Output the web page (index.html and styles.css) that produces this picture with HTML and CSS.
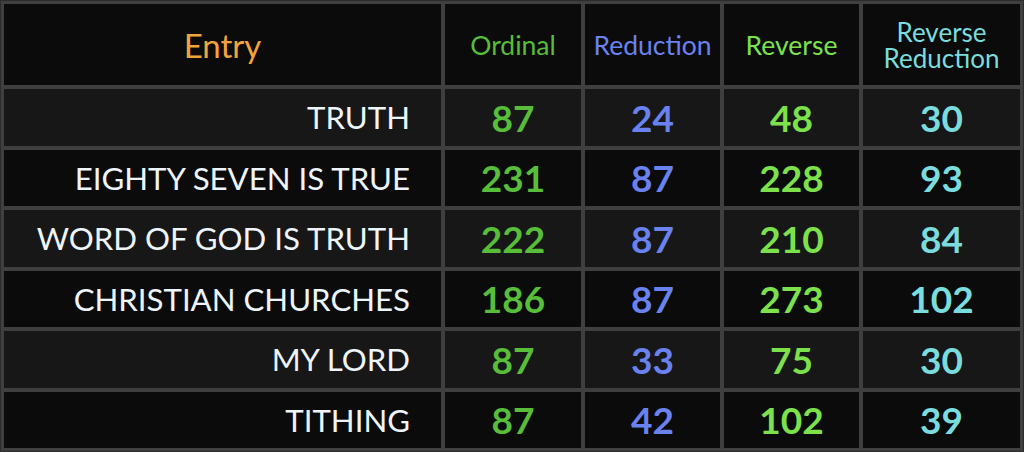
FILE: index.html
```html
<!DOCTYPE html>
<html>
<head>
<meta charset="utf-8">
<link rel="stylesheet" href="styles.css">
</head>
<body>
<div class="table">
  <div class="cell head entry-h">Entry</div>
  <div class="cell head c-ord">Ordinal</div>
  <div class="cell head c-red">Reduction</div>
  <div class="cell head c-rev">Reverse</div>
  <div class="cell head c-rr two">Reverse<br>Reduction</div>

  <div class="cell light name">TRUTH</div>
  <div class="cell light num c-ord">87</div>
  <div class="cell light num c-red">24</div>
  <div class="cell light num c-rev">48</div>
  <div class="cell light num c-rr">30</div>

  <div class="cell dark name">EIGHTY SEVEN IS TRUE</div>
  <div class="cell dark num c-ord">231</div>
  <div class="cell dark num c-red">87</div>
  <div class="cell dark num c-rev">228</div>
  <div class="cell dark num c-rr">93</div>

  <div class="cell light name">WORD OF GOD IS TRUTH</div>
  <div class="cell light num c-ord">222</div>
  <div class="cell light num c-red">87</div>
  <div class="cell light num c-rev">210</div>
  <div class="cell light num c-rr">84</div>

  <div class="cell dark name">CHRISTIAN CHURCHES</div>
  <div class="cell dark num c-ord">186</div>
  <div class="cell dark num c-red">87</div>
  <div class="cell dark num c-rev">273</div>
  <div class="cell dark num c-rr">102</div>

  <div class="cell light name">MY LORD</div>
  <div class="cell light num c-ord">87</div>
  <div class="cell light num c-red">33</div>
  <div class="cell light num c-rev">75</div>
  <div class="cell light num c-rr">30</div>

  <div class="cell dark name">TITHING</div>
  <div class="cell dark num c-ord">87</div>
  <div class="cell dark num c-red">42</div>
  <div class="cell dark num c-rev">102</div>
  <div class="cell dark num c-rr">39</div>
</div>
</body>
</html>
```

FILE: styles.css
```css
html, body {
  margin: 0;
  padding: 0;
  background: #3e3e3e;
}
body {
  font-family: Lato, "Noto Sans", sans-serif;
}
.table {
  box-sizing: border-box;
  width: 1024px;
  height: 452px;
  border: 1px solid #2c2c2c;
  padding: 3px;
  background: #3f3f3f;
  display: grid;
  grid-template-columns: 437px 136px 135px 135px 157px;
  grid-template-rows: 81px repeat(6, 1fr);
  gap: 4px;
}
.cell {
  display: flex;
  align-items: center;
  justify-content: center;
  text-align: center;
}
.head {
  background: #0b0b0b;
  font-size: 26.5px;
}
.entry-h {
  color: #f2a43a;
  font-size: 33px;
}
.two {
  line-height: 26px;
  font-size: 26px;
}
.light { background: #171717; }
.dark { background: #0b0b0b; }
.name {
  justify-content: flex-end;
  padding-right: 31px;
  color: #eef5fa;
  font-size: 31.2px;
}
.num {
  font-weight: 700;
  font-size: 37px;
}
.c-ord { color: #58bd38; }
.c-red { color: #6a82ef; }
.c-rev { color: #7de14b; }
.c-rr { color: #7adcdd; }
```
